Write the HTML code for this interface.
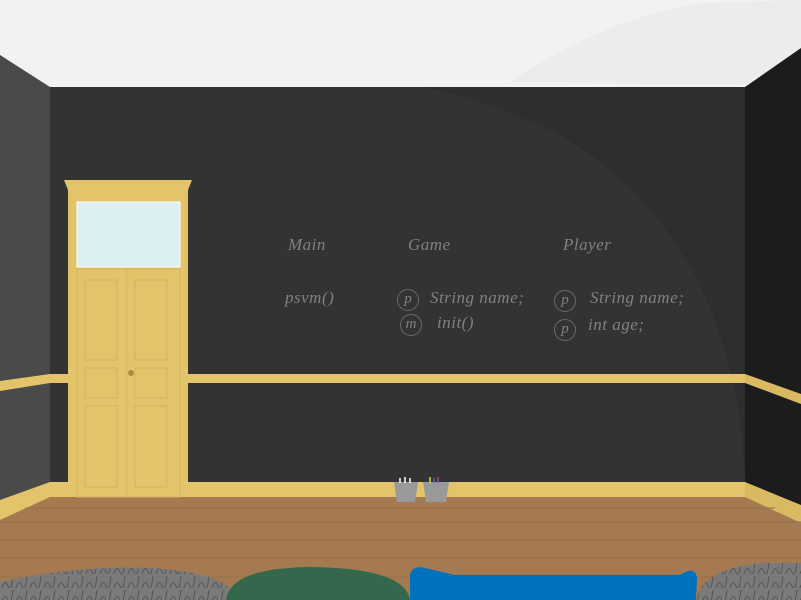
<!DOCTYPE html>
<html><head><style>
body{margin:0;width:801px;height:600px;overflow:hidden;background:#f2f2f2;position:relative;font-family:"Liberation Serif",serif}
.t{position:absolute;color:#808080;font-style:italic;font-family:"URW Chancery L","Liberation Serif",cursive;font-size:17px;letter-spacing:0.5px}
.c{position:absolute;width:20px;height:20px;border:1px solid #6a6a6a;border-radius:50%;color:#808080;font-style:italic;font-size:15px;text-align:center;line-height:18px}
</style></head><body>
<svg width="801" height="600" style="position:absolute;left:0;top:0">
<defs><pattern id="g" width="14" height="14" patternUnits="userSpaceOnUse"><rect width="14" height="14" fill="#7a7a7a"/><path d="M2 14 Q5 4 8 12 T13 2" stroke="#555" fill="none"/></pattern></defs>
<rect width="801" height="87" fill="#f2f2f2"/>
<path d="M510 82 Q600 20 700 3 L801 0 L801 48 L745 85 Z" fill="#ececec"/>
<rect x="50" y="87" width="695" height="410" fill="#333"/>
<path d="M420 87 L745 87 L745 480 Q735 240 560 135 Q490 100 420 87Z" fill="#2e2e2e"/>
<polygon points="0,55 50,87 50,497 0,520" fill="#4a4a4a"/>
<polygon points="801,48 745,87 745,497 801,523" fill="#1c1c1c"/>
<rect x="50" y="374" width="695" height="9" fill="#e3c46b"/>
<polygon points="0,381 50,374 50,383 0,391" fill="#e3c46b"/>
<polygon points="745,374 801,394 801,404 745,383" fill="#d9b962"/>
<rect x="50" y="482" width="695" height="16" fill="#e3c46b"/>
<polygon points="0,500 50,482 50,498 0,520" fill="#e3c46b"/>
<polygon points="745,482 801,505 801,523 745,498" fill="#d9b962"/>
<polygon points="50,497 745,497 801,523 801,600 0,600 0,520" fill="#a57a50"/>
<g stroke="#96714a" stroke-width="1"><line x1="0" y1="540" x2="801" y2="540"/><line x1="0" y1="558" x2="801" y2="558"/><line x1="0" y1="577" x2="801" y2="577"/><line x1="0" y1="522" x2="801" y2="522"/><line x1="25" y1="508" x2="775" y2="508"/></g>
<polygon points="64,180 192,180 188,190 68,190" fill="#e3c46b"/>
<rect x="68" y="190" width="120" height="307" fill="#e3c46b"/>
<rect x="77" y="202" width="103" height="65" fill="#dcf0f3" stroke="#fff"/>
<g fill="none" stroke="#d3b35c"><rect x="77" y="269" width="50" height="228"/><rect x="127" y="269" width="53" height="228"/>
<rect x="85" y="280" width="32" height="80"/><rect x="85" y="368" width="32" height="30"/><rect x="85" y="406" width="32" height="81"/>
<rect x="135" y="280" width="32" height="80"/><rect x="135" y="368" width="32" height="30"/><rect x="135" y="406" width="32" height="81"/></g>
<circle cx="131" cy="373" r="3" fill="#b08a45"/>
<path d="M394 482 L418 482 L415 502 L397 502Z" fill="#999"/>
<path d="M423 482 L449 482 L446 502 L426 502Z" fill="#999"/>
<g stroke-width="1.5"><line x1="400" y1="478" x2="400" y2="483" stroke="#fff"/><line x1="405" y1="477" x2="405" y2="483" stroke="#fff"/><line x1="410" y1="478" x2="410" y2="483" stroke="#fff"/>
<line x1="430" y1="477" x2="430" y2="483" stroke="#e5d23a"/><line x1="434" y1="478" x2="434" y2="483" stroke="#3a6fe5"/><line x1="438" y1="477" x2="438" y2="483" stroke="#c03a9a"/></g>
<path d="M0 600 L0 582 Q80 565 150 568 Q215 572 232 590 L232 600Z" fill="url(#g)"/>
<path d="M226 600 Q230 568 310 567 Q405 568 410 600Z" fill="#33684d"/>
<path d="M410 600 L410 575 Q412 565 425 568 L455 575 L680 575 Q695 565 697 578 L696 600Z" fill="#0072bd"/>
<path d="M697 600 Q700 570 760 563 L801 563 L801 600Z" fill="url(#g)"/>
</svg>
<div class="t" style="left:288px;top:235px">Main</div>
<div class="t" style="left:408px;top:235px">Game</div>
<div class="t" style="left:563px;top:235px">Player</div>
<div class="t" style="left:285px;top:288px">psvm()</div>
<div class="c" style="left:397px;top:289px">p</div>
<div class="t" style="left:430px;top:288px">String name;</div>
<div class="c" style="left:400px;top:314px">m</div>
<div class="t" style="left:437px;top:313px">init()</div>
<div class="c" style="left:554px;top:290px">p</div>
<div class="t" style="left:590px;top:288px">String name;</div>
<div class="c" style="left:554px;top:319px">p</div>
<div class="t" style="left:588px;top:315px">int age;</div>
</body></html>
